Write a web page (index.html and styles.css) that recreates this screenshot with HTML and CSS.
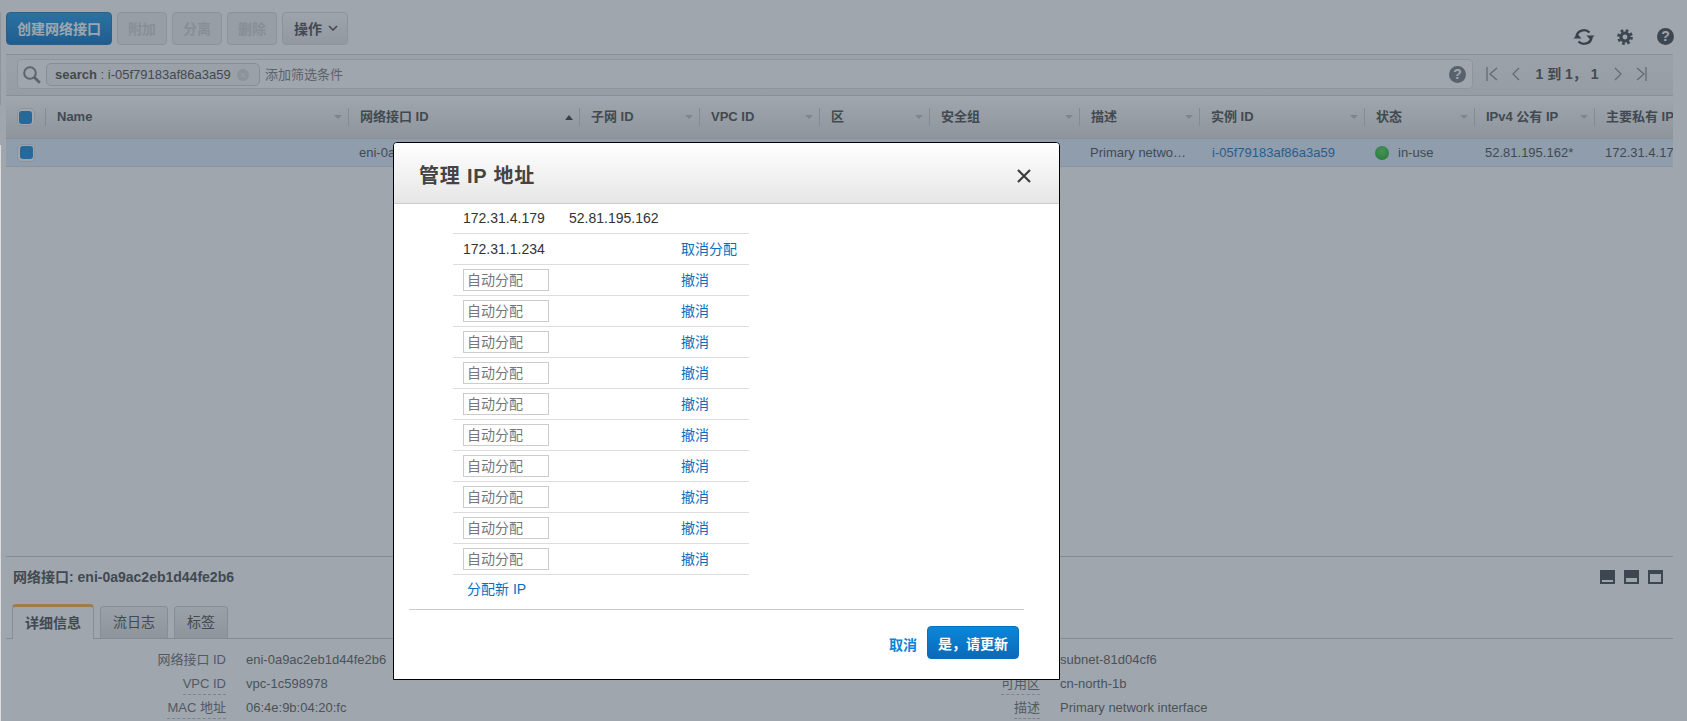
FILE: index.html
```html
<!DOCTYPE html>
<html lang="zh">
<head>
	<meta charset="UTF-8">
	<title>网络接口</title>
	<link rel="stylesheet" href="styles.css">
</head>
<body>

	<div class="console">
		<div class="toolbar">
			<button class="btn primary">创建网络接口</button>
			<button class="btn off w50">附加</button>
			<button class="btn off w50">分离</button>
			<button class="btn off w50">删除</button>
			<button class="btn menu">操作
				<svg class="chev" width="10" height="6" viewBox="0 0 10 6"><path d="M1 1l4 4 4-4" fill="none" stroke="#444" stroke-width="1.6"/></svg>
			</button>
			<div class="tools">
				<svg width="22" height="18" viewBox="0 0 22 18">
					<path d="M3.5 8.5A7.5 7 0 0 1 16.5 4.5" fill="none" stroke="#2f343b" stroke-width="2.4"/>
					<path d="M13.5 7.5h8l-4 4.5z" fill="#2f343b"/>
					<path d="M18.5 9.5A7.5 7 0 0 1 5.5 13.5" fill="none" stroke="#2f343b" stroke-width="2.4"/>
					<path d="M0.5 10.5h8l-4-4.5z" fill="#2f343b"/>
				</svg>
				<svg width="16" height="16" viewBox="0 0 16 16">
					<circle cx="8" cy="8" r="6.4" fill="none" stroke="#3b4048" stroke-width="3" stroke-dasharray="2.6 2.42"/>
					<circle cx="8" cy="8" r="4" fill="none" stroke="#3b4048" stroke-width="3.2"/>
				</svg>
				<span class="help big">?</span>
			</div>
		</div>

		<div class="filterbar">
			<div class="search">
				<svg class="glass" width="18" height="18" viewBox="0 0 18 18">
					<circle cx="7" cy="7" r="5.8" fill="none" stroke="#767d85" stroke-width="2"/>
					<path d="M11 11l5.8 5.8" stroke="#767d85" stroke-width="2.8"/>
				</svg>
				<span class="tag"><b>search</b> : i-05f79183af86a3a59<i class="tagx">×</i></span>
				<span class="hint">添加筛选条件</span>
				<span class="help grey">?</span>
			</div>
			<div class="pager">
				<svg width="12" height="14" viewBox="0 0 12 14"><path d="M1 0v14M11 1L4 7l7 6" fill="none" stroke="#7d848c" stroke-width="1.2"/></svg>
				<svg class="gap14" width="8" height="14" viewBox="0 0 8 14"><path d="M7 1L1 7l6 6" fill="none" stroke="#7d848c" stroke-width="1.2"/></svg>
				<b class="pages">1 到 1， 1</b>
				<svg width="8" height="14" viewBox="0 0 8 14"><path d="M1 1l6 6-6 6" fill="none" stroke="#7d848c" stroke-width="1.2"/></svg>
				<svg class="gap14" width="11" height="14" viewBox="0 0 11 14"><path d="M10 0v14M1 1l7 6-7 6" fill="none" stroke="#7d848c" stroke-width="1.2"/></svg>
			</div>
		</div>

		<div class="list">
			<div class="grid head">
				<div class="cell chk"><span class="check"></span></div>
				<div class="cell">Name<i class="sort"></i></div>
				<div class="cell">网络接口 ID<i class="sort up"></i></div>
				<div class="cell">子网 ID<i class="sort"></i></div>
				<div class="cell">VPC ID<i class="sort"></i></div>
				<div class="cell">区<i class="sort"></i></div>
				<div class="cell">安全组<i class="sort"></i></div>
				<div class="cell">描述<i class="sort"></i></div>
				<div class="cell">实例 ID<i class="sort"></i></div>
				<div class="cell">状态<i class="sort"></i></div>
				<div class="cell">IPv4 公有 IP<i class="sort"></i></div>
				<div class="cell">主要私有 IP</div>
			</div>
			<div class="grid row">
				<div class="cell chk"><span class="check"></span></div>
				<div class="cell"></div>
				<div class="cell">eni-0a9ac2eb1d44fe2b6</div>
				<div class="cell">subnet-81d04cf6</div>
				<div class="cell">vpc-1c598978</div>
				<div class="cell">cn-north-1b</div>
				<div class="cell">default</div>
				<div class="cell">Primary netwo…</div>
				<div class="cell"><a class="inst" href="#">i-05f79183af86a3a59</a></div>
				<div class="cell"><i class="dot"></i>in-use</div>
				<div class="cell">52.81.195.162*</div>
				<div class="cell">172.31.4.179</div>
			</div>
		</div>

		<div class="panel">
			<div class="panelhead">
				<b>网络接口: eni-0a9ac2eb1d44fe2b6</b>
				<div class="sizes">
					<span class="size"><i class="s1"></i></span>
					<span class="size"><i class="s2"></i></span>
					<span class="size"><i class="s3"></i></span>
				</div>
			</div>
			<div class="tabs">
				<div class="tab current">详细信息</div>
				<div class="tab">流日志</div>
				<div class="tab">标签</div>
			</div>
			<div class="details">
				<dl class="col">
					<dt>网络接口 ID</dt><dd>eni-0a9ac2eb1d44fe2b6</dd>
					<dt><span class="tip">VPC ID</span></dt><dd>vpc-1c598978</dd>
					<dt><span class="tip">MAC 地址</span></dt><dd>06:4e:9b:04:20:fc</dd>
				</dl>
				<dl class="col">
					<dt>子网 ID</dt><dd>subnet-81d04cf6</dd>
					<dt><span class="tip">可用区</span></dt><dd>cn-north-1b</dd>
					<dt><span class="tip">描述</span></dt><dd>Primary network interface</dd>
				</dl>
			</div>
		</div>
	</div>

	<div class="overlay"></div>

	<div class="modal">
		<div class="modalhead">
			<h2>管理 IP 地址</h2>
			<svg width="14" height="14" viewBox="0 0 14 14"><path d="M1 1l12 12M13 1L1 13" stroke="#3c3c3c" stroke-width="2.2"/></svg>
		</div>
		<div class="iplist">
			<div class="iprow first"><span>172.31.4.179</span><span>52.81.195.162</span></div>
			<div class="iprow"><span>172.31.1.234</span><span></span><a href="#">取消分配</a></div>
			<div class="iprow"><input placeholder="自动分配"><span></span><a href="#">撤消</a></div>
			<div class="iprow"><input placeholder="自动分配"><span></span><a href="#">撤消</a></div>
			<div class="iprow"><input placeholder="自动分配"><span></span><a href="#">撤消</a></div>
			<div class="iprow"><input placeholder="自动分配"><span></span><a href="#">撤消</a></div>
			<div class="iprow"><input placeholder="自动分配"><span></span><a href="#">撤消</a></div>
			<div class="iprow"><input placeholder="自动分配"><span></span><a href="#">撤消</a></div>
			<div class="iprow"><input placeholder="自动分配"><span></span><a href="#">撤消</a></div>
			<div class="iprow"><input placeholder="自动分配"><span></span><a href="#">撤消</a></div>
			<div class="iprow"><input placeholder="自动分配"><span></span><a href="#">撤消</a></div>
			<div class="iprow"><input placeholder="自动分配"><span></span><a href="#">撤消</a></div>
			<a class="newip" href="#">分配新 IP</a>
		</div>
		<div class="modalfoot">
			<a class="cancel" href="#">取消</a>
			<button class="yes">是，请更新</button>
		</div>
	</div>

</body>
</html>
```

FILE: styles.css
```css
*{
	margin: 0;
	padding: 0;
	box-sizing: border-box;
}

html, body{
	height: 721px;
	overflow: hidden;
}

body{
	font: 13px/1.2 "Liberation Sans", "Noto Sans CJK SC", sans-serif;
	color: #444;
	background: #fff;
}

/* 左侧边栏留下的细线 */
body::before,
body::after{
	content: "";
	position: absolute;
	left: 0;
	width: 1px;
	background: #dcdcdc;
}

body::before{
	top: 12px;
	height: 93px;
}

body::after{
	top: 145px;
	height: 576px;
}

a{
	color: #0a6ebd;
	text-decoration: none;
}

i{
	font-style: normal;
}

.console{
	width: 1667px;
	height: 721px;
	margin-left: 6px;
	display: flex;
	flex-direction: column;
}

/* 顶部工具栏 */
.toolbar{
	height: 55px;
	flex: none;
	padding-top: 12px;
	display: flex;
	align-items: flex-start;
	gap: 5px;
	border-bottom: 1px solid #d0d0d0;
}

.btn{
	height: 33px;
	padding-bottom: 2px;
	border: 1px solid #d8d8d8;
	border-radius: 4px;
	font: bold 14px "Liberation Sans", "Noto Sans CJK SC", sans-serif;
	background: linear-gradient(#fafafa, #e4e4e4);
	color: #444;
}

.btn.primary{
	width: 106px;
	color: #fff;
	border-color: #1670b8;
	background: linear-gradient(#1596e6, #006cc4);
}

.btn.off{
	color: #cfcfcf;
	background: #efefef;
}

.w50{
	width: 50px;
}

.btn.menu{
	width: 66px;
	padding-left: 11px;
	display: flex;
	align-items: center;
	gap: 6px;
}

.tools{
	margin: 8px -1px 0 auto;
	height: 33px;
	display: flex;
	align-items: center;
	gap: 22px;
}

.help{
	display: block;
	border-radius: 50%;
	background: #3b4048;
	color: #fff;
	font-weight: bold;
	text-align: center;
}

.help.big{
	width: 17px;
	height: 17px;
	margin-left: 2px;
	font-size: 14px;
	line-height: 17px;
}

.help.grey{
	width: 17px;
	height: 17px;
	line-height: 17px;
	font-size: 14px;
	background: #6f767e;
	margin-left: auto;
}

/* 筛选条 */
.filterbar{
	height: 41px;
	flex: none;
	padding: 4px 0 0 11px;
	display: flex;
	align-items: flex-start;
	background: linear-gradient(#f6f6f6, #ececec);
	border-bottom: 1px solid #d0d0d0;
}

.search{
	width: 1456px;
	height: 30px;
	padding: 1px 6px 0 5px;
	display: flex;
	align-items: center;
	background: #fff;
	border: 1px solid #dcdcdc;
	border-radius: 4px;
}

.glass{
	flex: none;
}

.tag{
	height: 23px;
	margin-left: 5px;
	padding: 0 10px 0 8px;
	width: 214px;
	display: flex;
	align-items: center;
	white-space: pre;
	border: 1px solid #ccc;
	border-radius: 5px;
	background: #f4f4f4;
}

.tagx{
	width: 12px;
	height: 12px;
	margin-left: auto;
	border-radius: 50%;
	background: #d8d8d8;
	color: #f4f4f4;
	font-size: 11px;
	line-height: 12px;
	text-align: center;
}

.hint{
	margin-left: 5px;
	color: #777;
}

.pager{
	margin-left: 13px;
	height: 30px;
	display: flex;
	align-items: center;
}

.gap14{
	margin-left: 14px;
}

.pages{
	width: 94px;
	text-align: center;
	font-size: 14px;
}

/* 表格 */
.list{
	flex: 1;
	overflow: hidden;
	min-height: 0;
}

.grid{
	display: grid;
	grid-template-columns: 40px 303px 231px 120px 120px 110px 150px 120px 165px 110px 120px 120px;
	width: 1667px;
	white-space: nowrap;
}

.head{
	height: 43px;
	font-weight: bold;
	background: linear-gradient(#ffffff, #dcdcdc);
	border-bottom: 1px solid #d0d0d0;
}

.head .cell{
	padding-left: 11px;
	position: relative;
	display: flex;
	align-items: center;
	border-right: 1px solid #c8c8c8;
	margin: 12px 0 12px;
}

.head .cell:last-child{
	border-right: 0;
}

.sort{
	position: absolute;
	right: 6px;
	top: 50%;
	margin-top: -2px;
	border-left: 4px solid transparent;
	border-right: 4px solid transparent;
	border-top: 4px solid #bdbdbd;
}

.sort.up{
	border-top: 0;
	border-bottom: 5px solid #333;
}

.row{
	height: 28px;
	background: #dfedff;
	border-bottom: 1px solid #d8d8d8;
}

.row .cell{
	padding-left: 10px;
	display: flex;
	align-items: center;
	overflow: hidden;
}

.inst{
	margin-left: 2px;
}

.cell.chk{
	padding: 0 !important;
	margin: 0 !important;
	justify-content: center;
	border-right: 0;
}

.head .cell.chk{
	margin: 12px 0 12px !important;
	border-right: 1px solid #c8c8c8;
}

.check{
	width: 18px;
	height: 18px;
	border: 1px solid #d8d8d8;
	border-radius: 5px;
	background: #fff;
	display: flex;
	align-items: center;
	justify-content: center;
}

.check::after{
	content: "";
	width: 13px;
	height: 13px;
	border-radius: 3px;
	background: #0a83d8;
}

.dot{
	width: 14px;
	height: 14px;
	margin-right: 9px;
	border-radius: 50%;
	background: radial-gradient(circle at 50% 35%, #50d850, #0aa01c);
}

/* 下方详情 */
.panel{
	height: 165px;
	flex: none;
	border-top: 1px solid #c8c8c8;
}

.panelhead{
	height: 40px;
	padding: 0 10px 0 7px;
	display: flex;
	align-items: center;
	justify-content: space-between;
	font-size: 14px;
}

.sizes{
	display: flex;
	gap: 9px;
}

.size{
	width: 15px;
	height: 14px;
	padding: 0 2px 2px;
	display: flex;
	align-items: flex-end;
	background: #3b4048;
}

.size i{
	width: 100%;
	background: #fff;
}

.s1{
	height: 2px;
}

.s2{
	height: 4px;
}

.s3{
	height: 8px;
}

.tabs{
	height: 42px;
	padding-left: 6px;
	display: flex;
	align-items: flex-end;
	gap: 6px;
	border-bottom: 1px solid #c8c8c8;
	font-size: 14px;
}

.tab{
	height: 32px;
	padding: 0 12px;
	display: flex;
	align-items: center;
	border: 1px solid #ccc;
	border-bottom: 0;
	border-radius: 4px 4px 0 0;
	background: linear-gradient(#f4f4f4, #dcdcdc);
}

.tab.current{
	width: 82px;
	height: 35px;
	padding: 0 12px;
	margin-bottom: -1px;
	font-weight: bold;
	background: #fff;
	border-top: 3px solid #ffad39;
}

.details{
	padding-top: 9px;
	display: flex;
}

.col{
	width: 814px;
	display: grid;
	grid-template-columns: 220px 1fr;
	grid-auto-rows: 24px;
	column-gap: 20px;
	align-items: center;
}

.col dt{
	text-align: right;
	color: #666;
}

.col dd{
	color: #555;
}

.tip{
	padding-bottom: 3px;
	border-bottom: 1px dashed #bbb;
}

/* 弹出层 */
.overlay{
	position: fixed;
	top: 0;
	left: 0;
	right: 0;
	bottom: 0;
	background: rgba(63,77,91,0.5);
}

.modal{
	position: absolute;
	left: 393px;
	top: 142px;
	width: 667px;
	height: 538px;
	background: #fff;
	border: 1px solid #000;
	border-radius: 4px 4px 0 0;
	font-size: 14px;
	color: #333;
}

.modalhead{
	height: 61px;
	padding: 5px 28px 0 25px;
	display: flex;
	align-items: center;
	justify-content: space-between;
	background: linear-gradient(#fff, #e6e6e6);
	border-bottom: 1px solid #ccc;
	border-radius: 3px 3px 0 0;
}

.modalhead h2{
	font-size: 20px;
	color: #444;
	letter-spacing: .8px;
}

.iplist{
	width: 296px;
	margin-left: 59px;
}

.iprow{
	height: 31px;
	padding-left: 10px;
	display: grid;
	grid-template-columns: 106px 112px 1fr;
	align-items: center;
	border-bottom: 1px solid #ddd;
}

.iprow.first{
	height: 30px;
}

.iprow input{
	width: 86px;
	height: 22px;
	padding-left: 3px;
	border: 1px solid #ccc;
	font: 14px "Liberation Sans", "Noto Sans CJK SC", sans-serif;
}

.iprow input::placeholder{
	color: #777;
}

.newip{
	display: block;
	height: 30px;
	padding-left: 14px;
	line-height: 29px;
}

.modalfoot{
	margin: 4px 35px 0 15px;
	padding: 16px 5px 0 0;
	display: flex;
	align-items: center;
	justify-content: flex-end;
	gap: 10px;
	border-top: 1px solid #ccc;
}

.cancel{
	margin-top: 6px;
	font-weight: bold;
	color: #0a83d8;
}

.yes{
	width: 92px;
	height: 33px;
	border: 1px solid #0a6ebd;
	border-radius: 4px;
	color: #fff;
	font: bold 14px "Liberation Sans", "Noto Sans CJK SC", sans-serif;
	background: linear-gradient(#0a87d8, #0b69b8);
}
```
